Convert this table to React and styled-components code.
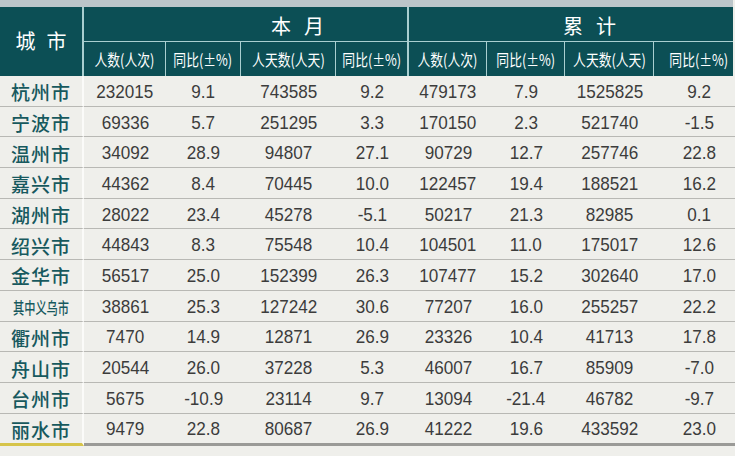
import React from 'react';
import styled, { createGlobalStyle } from 'styled-components';

const GlobalStyle = createGlobalStyle`
  body {
    margin: 0;
    background: #efefeb;
    overflow: hidden;
    font-family: "Liberation Sans", "Noto Sans CJK SC", sans-serif;
  }
`;

const COLS = '84px 82px 75px 95px 73px 78px 78px 89px 90px';
const DATA_COLS = '82px 75px 95px 73px 78px 78px 89px 90px';

const rows = [
  ['杭州市', '232015', '9.1', '743585', '9.2', '479173', '7.9', '1525825', '9.2'],
  ['宁波市', '69336', '5.7', '251295', '3.3', '170150', '2.3', '521740', '-1.5'],
  ['温州市', '34092', '28.9', '94807', '27.1', '90729', '12.7', '257746', '22.8'],
  ['嘉兴市', '44362', '8.4', '70445', '10.0', '122457', '19.4', '188521', '16.2'],
  ['湖州市', '28022', '23.4', '45278', '-5.1', '50217', '21.3', '82985', '0.1'],
  ['绍兴市', '44843', '8.3', '75548', '10.4', '104501', '11.0', '175017', '12.6'],
  ['金华市', '56517', '25.0', '152399', '26.3', '107477', '15.2', '302640', '17.0'],
  ['其中义乌市', '38861', '25.3', '127242', '30.6', '77207', '16.0', '255257', '22.2'],
  ['衢州市', '7470', '14.9', '12871', '26.9', '23326', '10.4', '41713', '17.8'],
  ['舟山市', '20544', '26.0', '37228', '5.3', '46007', '16.7', '85909', '-7.0'],
  ['台州市', '5675', '-10.9', '23114', '9.7', '13094', '-21.4', '46782', '-9.7'],
  ['丽水市', '9479', '22.8', '80687', '26.9', '41222', '19.6', '433592', '23.0'],
];

const subHeads = ['人数(人次)', '同比(±%)', '人天数(人天)', '同比(±%)'];

const Page = styled.div`
  width: 735px;
  height: 456px;
  overflow: hidden;
`;

const TopBand = styled.div`
  width: 733px;
  height: 7px;
  background: #bcc6ca;
`;

const Header = styled.div`
  width: 733px;
  height: 69px;
  overflow: hidden;
  display: grid;
  grid-template-columns: ${COLS};
  grid-template-rows: 35px 34px;
  background: #0c4f55;
  color: #fff;
`;

const HeadCell = styled.div`
  box-sizing: border-box;
  display: flex;
  align-items: center;
  justify-content: ${(p) => (p.$pad ? 'flex-start' : 'center')};
  padding-left: ${(p) => p.$pad || 0}px;
  border-right: ${(p) => p.$line || 0}px solid #a9cfd0;
  border-bottom: ${(p) => (p.$under ? '1px solid #a9cfd0' : 'none')};
  font-family: "Noto Sans CJK SC", sans-serif;
`;

const CityHead = styled(HeadCell)`
  grid-row: 1 / span 2;
  font-size: 20px;
  letter-spacing: 11px;
  padding-left: 11px;
  padding-bottom: 2px;
`;

const GroupHead = styled(HeadCell)`
  grid-column: ${(p) => p.$cols};
  font-size: 20px;
  letter-spacing: 13px;
  padding-top: 2px;
`;

const SubLabel = styled.span`
  display: inline-block;
  font-size: 16px;
  white-space: nowrap;
  transform: scaleX(0.8);
`;

const Row = styled.div`
  display: flex;
  width: 719px;
  height: ${(p) => (p.$last ? '32.7px' : '30.7px')};
`;

const CityCell = styled.div`
  box-sizing: border-box;
  width: 84px;
  flex: none;
  display: flex;
  align-items: center;
  justify-content: center;
  border-right: 2px solid #fbfbf9;
  border-bottom: ${(p) => (p.$last ? '3px solid #d6c44a' : '1px solid #b8b8b4')};
  color: #17595e;
  font-family: "Noto Sans CJK SC", sans-serif;
  font-weight: 500;
  font-size: 19px;
  letter-spacing: 1px;
  padding-top: 2px;
`;

const NarrowName = styled.span`
  display: inline-block;
  font-size: 16px;
  letter-spacing: 0;
  white-space: nowrap;
  transform: scaleX(0.7);
`;

const DataRow = styled.div`
  box-sizing: border-box;
  flex: 1;
  display: grid;
  grid-template-columns: ${DATA_COLS};
  border-bottom: ${(p) => (p.$last ? '3px solid #9a9a97' : '1px solid #b8b8b4')};
`;

const Num = styled.div`
  display: flex;
  align-items: center;
  justify-content: center;
  padding-top: 2px;
  font-family: "Liberation Sans", sans-serif;
  font-size: 19px;
  color: #3c3c3c;
  span {
    display: inline-block;
    transform: scaleX(0.9);
  }
`;

export default function App() {
  return (
    <Page>
      <GlobalStyle />
      <TopBand />
      <Header>
        <CityHead $line={2}>城市</CityHead>
        <GroupHead $cols="2 / span 4" $line={2} $under $pad={187}>本月</GroupHead>
        <GroupHead $cols="6 / span 4" $under $pad={154}>累计</GroupHead>
        {[...subHeads, ...subHeads].map((s, i) => (
          <HeadCell key={i} $line={i === 3 ? 2 : i === 7 ? 0 : 1}>
            <SubLabel>{s}</SubLabel>
          </HeadCell>
        ))}
      </Header>
      {rows.map((r, i) => {
        const last = i === rows.length - 1;
        return (
          <Row key={r[0]} $last={last}>
            <CityCell $last={last}>
              {r[0].length > 3 ? <NarrowName>{r[0]}</NarrowName> : r[0]}
            </CityCell>
            <DataRow $last={last}>
              {r.slice(1).map((v, j) => (
                <Num key={j}>
                  <span>{v}</span>
                </Num>
              ))}
            </DataRow>
          </Row>
        );
      })}
    </Page>
  );
}
